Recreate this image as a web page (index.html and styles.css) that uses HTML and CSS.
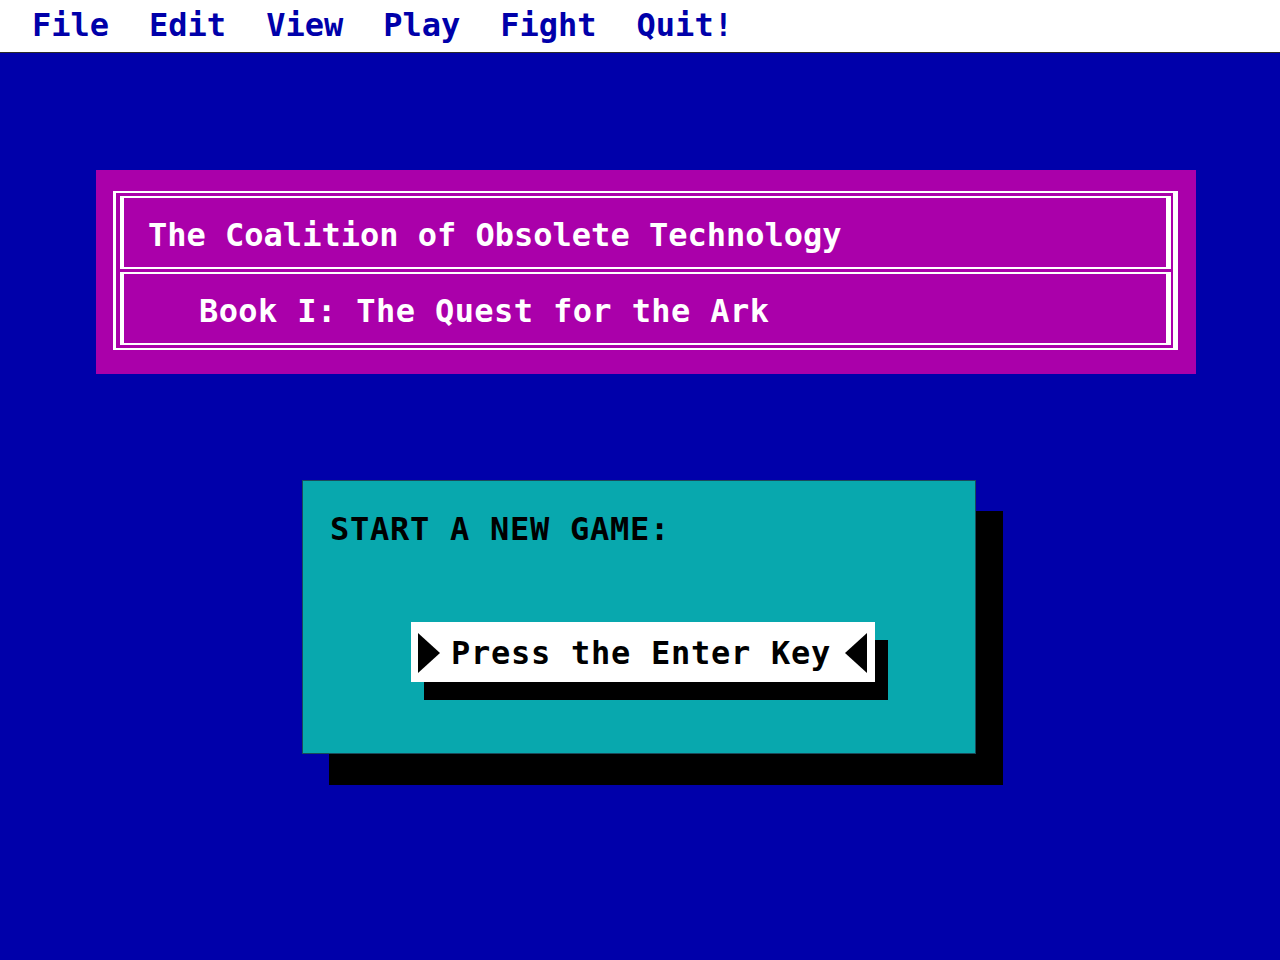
FILE: index.html
```html
<!DOCTYPE html>
<html lang="en">
<head>
<meta charset="utf-8">
<title>The Coalition of Obsolete Technology</title>
<link rel="stylesheet" href="styles.css">
</head>
<body>
<nav class="menubar">
  <span class="menu-item">File</span>
  <span class="menu-item">Edit</span>
  <span class="menu-item">View</span>
  <span class="menu-item">Play</span>
  <span class="menu-item">Fight</span>
  <span class="menu-item">Quit!</span>
</nav>
<main class="screen">
  <section class="title-panel">
    <div class="frame">
      <div class="row row-title">The Coalition of Obsolete Technology</div>
      <div class="row row-subtitle">Book I: The Quest for the Ark</div>
    </div>
  </section>
  <section class="dialog">
    <div class="dialog-label">START A NEW GAME:</div>
    <div class="enter-button">
      <svg class="arrow" width="22" height="40" viewBox="0 0 22 40"><polygon points="0,0 22,20 0,40" fill="#000"/></svg>
      <span class="enter-text">Press the Enter Key</span>
      <svg class="arrow" width="22" height="40" viewBox="0 0 22 40"><polygon points="22,0 0,20 22,40" fill="#000"/></svg>
    </div>
  </section>
</main>
</body>
</html>
```
FILE: styles.css
```css
html, body {
  margin: 0;
  padding: 0;
}

body {
  background: #0000aa;
  font-family: "DejaVu Sans Mono", "Liberation Mono", monospace;
  font-weight: bold;
  font-size: 32px;
  line-height: 32px;
  width: 1280px;
  height: 960px;
  overflow: hidden;
}

.menubar {
  box-sizing: border-box;
  height: 53px;
  background: #ffffff;
  border-bottom: 1px solid #2a2a2a;
  display: flex;
  gap: 40px;
  padding: 9px 0 0 32px;
  color: #0000aa;
}

.screen {
  display: flex;
  flex-direction: column;
}

.title-panel {
  box-sizing: border-box;
  width: 1100px;
  height: 204px;
  margin: 117px 0 0 96px;
  padding: 21px 18px 24px 17px;
  background: #aa00aa;
}

.frame {
  box-sizing: border-box;
  height: 159px;
  border-style: solid;
  border-color: #ffffff;
  border-width: 2px 5px 2px 3px;
  padding: 3px 2px 3px 4px;
  display: flex;
  flex-direction: column;
  gap: 3px;
}

.row {
  box-sizing: border-box;
  height: 73px;
  border-style: solid;
  border-color: #ffffff;
  border-width: 2px 5px 2px 4px;
  padding-top: 21px;
  color: #ffffff;
  white-space: pre;
}

.row-title {
  padding-left: 24px;
}

.row-subtitle {
  padding-left: 75px;
  letter-spacing: 0.4px;
}

.dialog {
  box-sizing: border-box;
  width: 674px;
  height: 274px;
  margin: 106px 0 0 302px;
  padding: 32px 0 0 27px;
  background: #08a8ae;
  border: 1px solid #1a4a5a;
  box-shadow: 27px 31px 0 #000000;
  color: #000000;
  letter-spacing: 0.74px;
}

.dialog-label {
  white-space: pre;
}

.enter-button {
  box-sizing: border-box;
  width: 464px;
  height: 60px;
  margin: 77px 0 0 81px;
  background: #ffffff;
  box-shadow: 13px 18px 0 #000000;
  display: flex;
  align-items: center;
  padding: 1px 8px 0 7px;
}

.arrow {
  display: block;
  flex: none;
}

.enter-text {
  margin-left: 11px;
  flex: 1;
  white-space: pre;
}
```
